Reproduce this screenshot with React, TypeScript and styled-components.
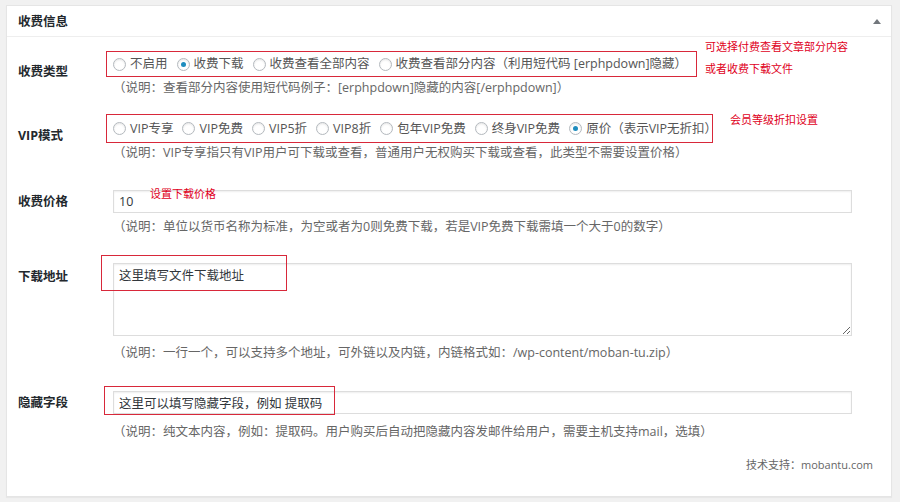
import React from 'react';
import styled, { createGlobalStyle } from 'styled-components';

const Global = createGlobalStyle`
  html, body { margin: 0; padding: 0; background: #f1f1f1; }
  body {
    font-family: "Open Sans", "Noto Sans CJK SC", sans-serif;
    font-size: 12.5px;
    color: #444;
  }
  * { box-sizing: border-box; }
`;

const Page = styled.div`
  width: 900px;
  height: 502px;
  padding: 5px 8px 5px 6px;
`;

const Panel = styled.section`
  height: 492px;
  background: #fff;
  border: 1px solid #e5e5e5;
  box-shadow: 0 1px 1px rgba(0, 0, 0, 0.04);
  display: flex;
  flex-direction: column;
`;

const Header = styled.header`
  height: 31px;
  flex: none;
  display: flex;
  align-items: center;
  justify-content: space-between;
  padding: 1px 10px 0 11px;
  border-bottom: 1px solid #eee;
`;

const Title = styled.h2`
  margin: 0;
  font-size: 12.5px;
  font-weight: 700;
  color: #23282d;
  line-height: 20px;
`;

const Toggle = styled.span`
  width: 0;
  height: 0;
  border-left: 4px solid transparent;
  border-right: 4px solid transparent;
  border-bottom: 5px solid #72777c;
`;

const Body = styled.div`
  padding: 0 39px 0 11px;
  display: flex;
  flex-direction: column;
`;

const Row = styled.div<{ $top: number }>`
  display: grid;
  grid-template-columns: 95px 1fr;
  align-items: start;
  margin-top: ${(p) => p.$top}px;
`;

const Label = styled.div<{ $pad: number }>`
  padding-top: ${(p) => p.$pad}px;
  line-height: 20px;
  font-weight: 700;
  color: #23282d;
`;

const Field = styled.div`
  position: relative;
  display: flex;
  flex-direction: column;
  min-width: 0;
`;

const RadioLine = styled.div<{ $h: number }>`
  height: ${(p) => p.$h}px;
  display: flex;
  align-items: center;
  white-space: nowrap;
`;

const RadioOption = styled.label`
  display: inline-flex;
  align-items: center;
  gap: 4px;
  margin-right: 9px;
  color: #555;
  line-height: 20px;
`;

const RadioMark = styled.span<{ $on?: boolean }>`
  width: 13px;
  height: 13px;
  flex: none;
  border-radius: 50%;
  border: 1px solid #b4b9be;
  background: #fff;
  box-shadow: inset 0 1px 2px rgba(0, 0, 0, 0.1);
  display: inline-flex;
  align-items: center;
  justify-content: center;
  &::after {
    content: '';
    width: 5px;
    height: 5px;
    border-radius: 50%;
    background: ${(p) => (p.$on ? '#1e8cbe' : 'transparent')};
  }
`;

const Desc = styled.p<{ $gap: number }>`
  margin: ${(p) => p.$gap}px 0 0;
  line-height: 20px;
  color: #666;
  white-space: nowrap;
`;

const TextInput = styled.input`
  width: 100%;
  height: 23px;
  margin: 0;
  border: 1px solid #ddd;
  box-shadow: inset 0 1px 2px rgba(0, 0, 0, 0.07);
  background: #fff;
  padding: 0 5px;
  font: inherit;
  color: #32373c;
  outline: none;
`;

const TextArea = styled.textarea`
  width: 100%;
  height: 73px;
  margin: 0;
  display: block;
  border: 1px solid #ddd;
  box-shadow: inset 0 1px 2px rgba(0, 0, 0, 0.07);
  background: #fff;
  padding: 3px 5px;
  font: inherit;
  line-height: 18px;
  color: #32373c;
  outline: none;
  resize: vertical;
`;

const Highlight = styled.span<{ $l: number; $t: number; $w: number; $h: number }>`
  position: absolute;
  left: ${(p) => p.$l}px;
  top: ${(p) => p.$t}px;
  width: ${(p) => p.$w}px;
  height: ${(p) => p.$h}px;
  border: 1.5px solid #d8283a;
  pointer-events: none;
`;

const Note = styled.span<{ $l: number; $t: number }>`
  position: absolute;
  left: ${(p) => p.$l}px;
  top: ${(p) => p.$t}px;
  font-size: 11px;
  line-height: 20px;
  color: #e0001b;
  white-space: nowrap;
  pointer-events: none;
`;

const Footer = styled.footer`
  margin-top: 13px;
  padding-right: 18px;
  text-align: right;
  line-height: 20px;
  font-size: 11px;
  color: #666;
`;

type Opt = { text: string; on?: boolean };

const typeOptions: Opt[] = [
  { text: '不启用' },
  { text: '收费下载', on: true },
  { text: '收费查看全部内容' },
  { text: '收费查看部分内容（利用短代码 [erphpdown]隐藏）' },
];

const vipOptions: Opt[] = [
  { text: 'VIP专享' },
  { text: 'VIP免费' },
  { text: 'VIP5折' },
  { text: 'VIP8折' },
  { text: '包年VIP免费' },
  { text: '终身VIP免费' },
  { text: '原价（表示VIP无折扣）', on: true },
];

const Radios = ({ options, h }: { options: Opt[]; h: number }) => (
  <RadioLine $h={h}>
    {options.map((o) => (
      <RadioOption key={o.text}>
        <RadioMark $on={o.on} />
        {o.text}
      </RadioOption>
    ))}
  </RadioLine>
);

export default function App() {
  return (
    <>
      <Global />
      <Page>
        <Panel>
          <Header>
            <Title>收费信息</Title>
            <Toggle />
          </Header>
          <Body>
            <Row $top={14}>
              <Label $pad={11}>收费类型</Label>
              <Field>
                <Radios options={typeOptions} h={26} />
                <Desc $gap={1}>（说明：查看部分内容使用短代码例子：[erphpdown]隐藏的内容[/erphpdown]）</Desc>
                <Highlight $l={-7} $t={0} $w={591} $h={26} />
                <Note $l={592} $t={-14}>可选择付费查看文章部分内容</Note>
                <Note $l={592} $t={8}>或者收费下载文件</Note>
              </Field>
            </Row>
            <Row $top={16}>
              <Label $pad={12}>VIP模式</Label>
              <Field>
                <Radios options={vipOptions} h={29} />
                <Desc $gap={0}>（说明：VIP专享指只有VIP用户可下载或查看，普通用户无权购买下载或查看，此类型不需要设置价格）</Desc>
                <Highlight $l={-7} $t={0} $w={607} $h={29} />
                <Note $l={617} $t={-4}>会员等级折扣设置</Note>
              </Field>
            </Row>
            <Row $top={27}>
              <Label $pad={2}>收费价格</Label>
              <Field>
                <TextInput defaultValue="10" />
                <Desc $gap={4}>（说明：单位以货币名称为标准，为空或者为0则免费下载，若是VIP免费下载需填一个大于0的数字）</Desc>
                <Note $l={37} $t={-6}>设置下载价格</Note>
              </Field>
            </Row>
            <Row $top={26}>
              <Label $pad={4}>下载地址</Label>
              <Field>
                <TextArea defaultValue="这里填写文件下载地址" />
                <Desc $gap={7}>（说明：一行一个，可以支持多个地址，可外链以及内链，内链格式如：/wp-content/moban-tu.zip）</Desc>
                <Highlight $l={-12} $t={-8} $w={186} $h={36} />
              </Field>
            </Row>
            <Row $top={28}>
              <Label $pad={2}>隐藏字段</Label>
              <Field>
                <TextInput defaultValue="这里可以填写隐藏字段，例如 提取码" />
                <Desc $gap={8}>（说明：纯文本内容，例如：提取码。用户购买后自动把隐藏内容发邮件给用户，需要主机支持mail，选填）</Desc>
                <Highlight $l={-9} $t={-5} $w={231} $h={29} />
              </Field>
            </Row>
          </Body>
          <Footer>技术支持：mobantu.com</Footer>
        </Panel>
      </Page>
    </>
  );
}
